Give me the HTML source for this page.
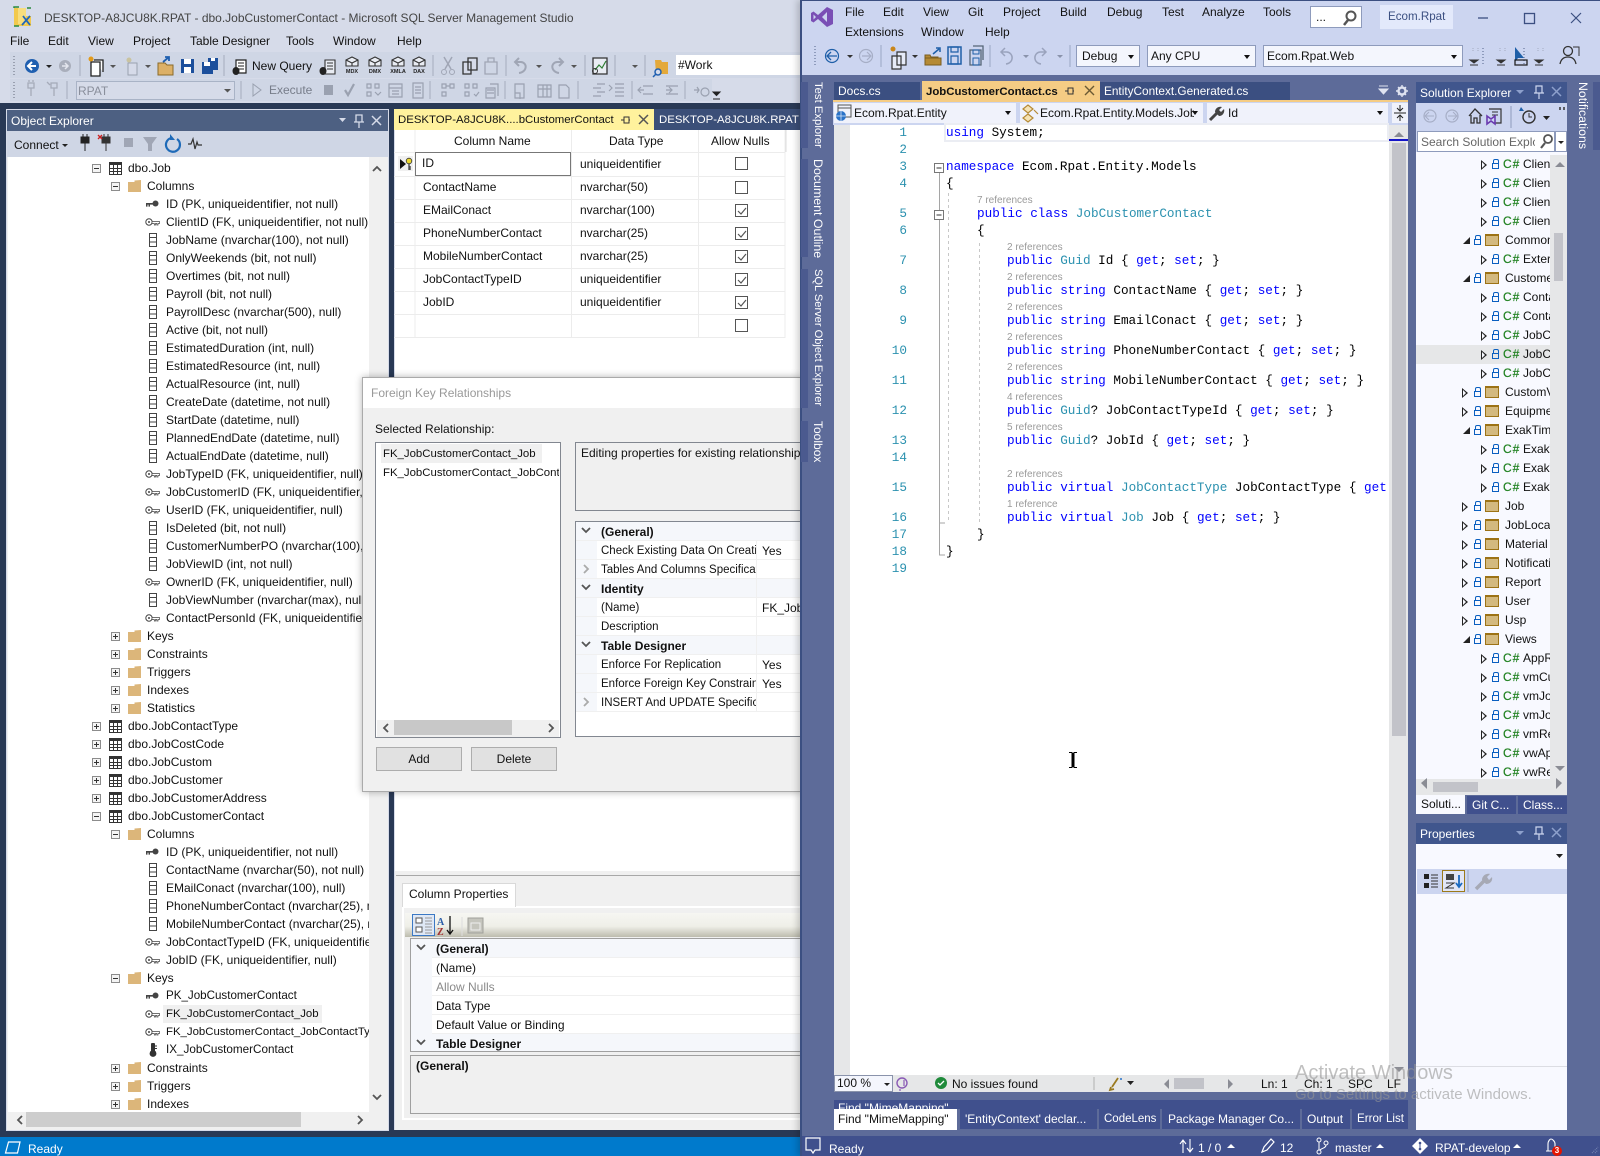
<!DOCTYPE html>
<html><head><meta charset="utf-8"><title>SSMS and Visual Studio</title>
<style>
*{box-sizing:border-box;margin:0;padding:0}
html,body{width:1600px;height:1156px;overflow:hidden;background:#293955}
body{position:relative;font:12px "Liberation Sans",sans-serif;color:#111}
.a{position:absolute}
.t{position:absolute;white-space:nowrap;line-height:16px;font-size:12px}
.w{color:#fff}
.ot{position:absolute;left:8px;top:159px;width:361px;height:953px;overflow:hidden}
.r{height:18px;line-height:18px;position:relative;white-space:nowrap;font-size:12px}
.r span{position:absolute;top:0}
.r span.nm{font-size:11.4px}
.l1 span{left:120px}.l2 span{left:139px}.l3 span{left:158px}
.ex{position:absolute;top:5px;width:9px;height:9px;border:1px solid #8c8c8c;background:#f4f4f4}
.ex::after{content:"";position:absolute;left:1px;top:3px;width:5px;height:1px;background:#333}
.ex.p::before{content:"";position:absolute;left:3px;top:1px;width:1px;height:5px;background:#333}
.l1 .ex{left:84px}.l2 .ex{left:103px}
.r svg{position:absolute}
.l1 svg{left:101px;top:3px;width:13px;height:13px}
.l2 svg{left:120px;top:3px;width:13px;height:12px}
.l3 svg{left:137px;top:2px;width:15px;height:14px}
.sel{position:absolute;left:155px;top:0;width:159px;height:18px;background:#f0f0f0}
.g{position:absolute;font-size:12px;white-space:nowrap;line-height:16px}
.cb{position:absolute;left:735px;width:13px;height:13px;border:1px solid #555;background:#fff}
.cb svg{position:absolute;left:1px;top:1px;width:10px;height:10px}
.pr{position:absolute;left:576px;width:224px;height:19px;border-bottom:1px solid #f0f0f0;background:#fff;overflow:hidden}
.pr .n{position:absolute;left:25px;top:2px;width:155px;overflow:hidden;white-space:nowrap;line-height:16px;font-size:11.5px}
.pr .v{position:absolute;left:186px;top:2px;line-height:16px;white-space:nowrap}
.pr .gu{position:absolute;left:0;top:0;width:21px;height:19px;background:#f5f7fb}
.pr.cat{background:#f5f7fb}
.pr.cat .n{font-weight:bold;font-size:12px}
.cv{position:absolute;left:5px;top:5px;width:10px;height:8px}
.pc{position:absolute;left:411px;width:389px;height:19px;background:#fff;border-bottom:1px solid #f0f0f0}
.pc .gu{position:absolute;left:0;top:0;width:21px;height:19px;background:#f5f7fb}
.pc .n{position:absolute;left:25px;top:2px;line-height:16px;white-space:nowrap}
.pc.cat{background:#f5f7fb;font-weight:bold}
#vs{position:absolute;left:800px;top:0;width:800px;height:1156px;background:#5d6b99;box-shadow:-3px 0 6px rgba(0,0,0,.18);border-left:2px solid #3b4f81}
.tabd{position:absolute;background:#3b4f81;color:#fff;white-space:nowrap;overflow:hidden;font-size:12px;line-height:18px}
.vt{position:absolute;white-space:nowrap;color:#fff;font-size:12px;transform-origin:0 0;transform:rotate(90deg);line-height:14px}
.combo{position:absolute;background:#f4f6fd;border:1px solid #8e9bbc;white-space:nowrap;overflow:hidden;line-height:20px;font-size:12px;padding-left:5px}
.combo i{position:absolute;right:5px;top:9px;border:3px solid transparent;border-top:4px solid #111;border-bottom:0}
.c{position:absolute;font:12.67px/16px "Liberation Mono",monospace;white-space:pre;color:#000}
.k{color:#0000ff}.y{color:#2b91af}
.ln{position:absolute;left:860px;width:47px;text-align:right;font:12.67px/16px "Liberation Mono",monospace;color:#2b91af}
.rf{position:absolute;font-size:10px;line-height:12px;color:#9a9a9a;white-space:nowrap;margin-top:1px}
.st{position:absolute;left:1416px;top:155px;width:134px;height:624px;overflow:hidden;background:#f8f9ff}
.s{height:19px;position:relative;line-height:19px;white-space:nowrap;font-size:12px}
.s.on{background:#e6e7e8}
.s span{position:absolute;left:107px;top:0}
.s.f span{left:89px}
.s em{position:absolute;left:87px;top:0;font:12px/19px "Liberation Sans";color:#1f801f;font-style:normal;letter-spacing:1px;-webkit-text-stroke:.2px #1f801f}
.s .h{position:absolute;left:65px;top:5px;border:5px solid transparent;border-left:6px solid #222;border-right:0}
.s .h::after{content:"";position:absolute;left:-5px;top:-3px;border:3px solid transparent;border-left:3px solid #f8f9ff;border-right:0}
.s.f .h{left:46px}
.s .o{position:absolute;left:47px;top:6px;width:0;height:0;border-style:solid;border-width:0 0 7px 7px;border-color:transparent transparent #222 transparent}
.s .l{position:absolute;left:76px;top:8px;width:7px;height:6px;border:1.4px solid #0a5fc0}
.s .l::before{content:"";position:absolute;left:0;top:-5px;width:4px;height:4px;border:1.2px solid #0a5fc0;border-bottom:0;border-radius:2px 2px 0 0}
.s.f .l{left:58px}
.s .d{position:absolute;left:69px;top:3px;width:14px;height:12px;background:#d3b97f;border:1px solid #9c7215;border-top-width:2px}
</style></head><body>
<svg width="0" height="0" style="position:absolute"><defs>
<symbol id="tb" viewBox="0 0 13 13"><rect x=".5" y=".5" width="12" height="12" fill="#fff" stroke="#333"/><rect x="0" y="0" width="13" height="3" fill="#333"/><path d="M4.5 3v10M8.5 3v10M0 6.5h13M0 9.5h13" stroke="#333" fill="none"/></symbol>
<symbol id="fd" viewBox="0 0 13 12"><path d="M0 2h6.5V0.5L13 0v12H0z" fill="#dcb67a"/></symbol>
<symbol id="cl" viewBox="0 0 15 14"><rect x="4.5" y=".5" width="7" height="13" fill="#fff" stroke="#444"/><path d="M4.5 4.5h7M4.5 9h7" stroke="#444" fill="none"/></symbol>
<symbol id="pk" viewBox="0 0 15 14"><circle cx="10.5" cy="6.5" r="3" fill="#444"/><path d="M1 6h7v1.6H5v2H3.5v-2H2.500v2H1z" fill="#444"/></symbol>
<symbol id="fk" viewBox="0 0 15 14"><circle cx="4" cy="7" r="3.200" fill="#fff" stroke="#444"/><circle cx="4" cy="7" r="1" fill="#444"/><path d="M7 6.500h7.500v2H13v1.500h-1.200V8.500H10.500v1.500H9.300V8.500H7z" fill="#fff" stroke="#444" stroke-width=".7"/></symbol>
<symbol id="ix" viewBox="0 0 15 14"><rect x="6" y="0" width="4" height="9" rx="1" fill="#333"/><circle cx="8" cy="10.500" r="3.400" fill="#333"/><path d="M10 3h2M10 5.500h2" stroke="#333"/></symbol>
<symbol id="ck" viewBox="0 0 10 10"><path d="M1 5l3 3 5-6" stroke="#555" stroke-width="1.200" fill="none"/></symbol>
<symbol id="cv" viewBox="0 0 10 8"><path d="M1 1l4 4 4-4" stroke="#555" stroke-width="1.800" fill="none"/></symbol>
<symbol id="cr" viewBox="0 0 8 10"><path d="M1 1l4 4-4 4" stroke="#aaa" stroke-width="1.800" fill="none"/></symbol>
</defs></svg>

<!-- SSMS chrome -->
<div class="a" style="left:0;top:0;width:800px;height:103px;background:#d6dbe9"></div>
<div class="a" style="left:10px;top:52px;width:790px;height:26px;background:#cfd6e5"></div>
<div class="a" style="left:10px;top:79px;width:702px;height:22px;background:#cfd6e5"></div>
<div class="t" style="left:44px;top:10px;color:#444">DESKTOP-A8JCU8K.RPAT - dbo.JobCustomerContact - Microsoft SQL Server Management Studio</div>
<div class="t" style="left:10px;top:33px">File</div><div class="t" style="left:48px;top:33px">Edit</div><div class="t" style="left:88px;top:33px">View</div><div class="t" style="left:133px;top:33px">Project</div><div class="t" style="left:190px;top:33px">Table Designer</div><div class="t" style="left:286px;top:33px">Tools</div><div class="t" style="left:333px;top:33px">Window</div><div class="t" style="left:397px;top:33px">Help</div>
<div class="t" style="left:252px;top:58px">New Query</div>
<div class="a" style="left:676px;top:55px;width:124px;height:20px;background:#fff"></div>
<div class="t" style="left:678px;top:57px">#Work</div>
<div class="a" style="left:76px;top:81px;width:159px;height:19px;background:#d6dbe9;border:1px solid #a9b3c6"></div>
<div class="t" style="left:78px;top:83px;color:#8a8f9c">RPAT</div>
<div class="t" style="left:269px;top:82px;color:#777d8a">Execute</div>
<svg class="a" style="left:0;top:0" width="800" height="103" fill="none">
<path d="M14 8h12v8h5v10H14z" fill="#f2c94c"/><path d="M18 8h8v16h-8z" fill="#f7dd7e"/><path d="M14 8v-1h5M31 8h-4M14 26h5" stroke="#2b8a3e" stroke-width="1.500"/><path d="M22 25l8-9M23 16l7 9" stroke="#2266bb" stroke-width="1.800"/>
<path d="M14 56v20M14 82v18" stroke="#99a0b0" stroke-width="2" stroke-dasharray="1 2"/>
<circle cx="32" cy="66" r="7" fill="#1f5fb0"/><path d="M36 66h-7M32 62l-4 4 4 4" stroke="#fff" stroke-width="2"/>
<path d="M46 65h6l-3 3z" fill="#222"/>
<circle cx="65" cy="66" r="6" fill="#a9aebb"/><path d="M62 66h6M65 63l3 3-3 3" stroke="#e4e6ee" stroke-width="1.500"/>
<path d="M80 55v21M224 55v21M433 55v21M506 55v21M585 55v21M615 55v21M645 55v21M67 81v18M241 81v18M505 81v18M578 81v18M632 81v18M685 81v18M430 81v18" stroke="#a5acbd"/>
<path d="M91 62h9v14h-9z M94 60h9v12" stroke="#222" stroke-width="1.300" fill="#fff"/><circle cx="91" cy="59" r="2.500" fill="#e29a1a"/><path d="M110 65h6l-3 3zM145 65h6l-3 3zM536 65h6l-3 3zM571 65h6l-3 3zM632 65h6l-3 3zM224 89h7l-3.500 3.500z" fill="#555"/>
<path d="M128 63h9v12h-9z" stroke="#9aa1b0" fill="#d6dbe9"/><circle cx="129" cy="60" r="2.500" fill="#c9c3a0"/>
<path d="M158 63h7l2 2h6v10h-15z" fill="#dcb067" stroke="#8a6a2a"/><path d="M163 62l6-5M165 57h4v4" stroke="#1f5fb0" stroke-width="1.800"/>
<path d="M181 59h13v14h-13z" fill="#1c4f9c"/><path d="M184 59h7v5h-7zM184 67h7v6h-7z" fill="#fff"/>
<path d="M202 62h11v12h-11z" fill="#1c4f9c"/><path d="M208 58h10v12h-5V62h-5z" fill="#1c4f9c"/><path d="M204 62h6v4h-6zM211 58h4v3h-4z" fill="#fff"/>
<path d="M236 60h10v13h-10z" fill="#fff" stroke="#222" stroke-width="1.200"/><path d="M238 63h6M238 66h6M238 69h6" stroke="#222"/><ellipse cx="236" cy="71" rx="3.500" ry="4" fill="#222"/>
<g stroke="#333" stroke-width="1.100" fill="#e9ecf3"><path d="M325 60h10v14h-10z"/><path d="M346 60l6-3 6 3v6h-12z"/><path d="M369 60l6-3 6 3v6h-12z"/><path d="M392 60l6-3 6 3v6h-12z"/><path d="M413 60l6-3 6 3v6h-12z"/><path d="M346 60l6 3 6-3M369 60l6 3 6-3M392 60l6 3 6-3M413 60l6 3 6-3M352 63v3M375 63v3M398 63v3M419 63v3"/></g>
<path d="M327 63h6M327 66h6M327 69h6" stroke="#333"/>
<ellipse cx="323" cy="71" rx="3.500" ry="4" fill="#222"/>
<g font-family="Liberation Sans" font-size="5.500" font-weight="bold" fill="#222" text-anchor="middle"><text x="352" y="73">MDX</text><text x="375" y="73">DMX</text><text x="398" y="73">XMLA</text><text x="419" y="73">DAX</text></g>
<path d="M444 57l7 12M452 57l-7 12" stroke="#a0a6b5" stroke-width="1.500"/><circle cx="444" cy="72" r="2.500" stroke="#a0a6b5"/><circle cx="452" cy="72" r="2.500" stroke="#a0a6b5"/>
<path d="M468 58h9v12h-9zM463 62h8v12h-8z" stroke="#333" stroke-width="1.300" fill="#d6dbe9"/>
<path d="M485 62h12v12h-12zM488 58h6v4h-6z" stroke="#a0a6b5" stroke-width="1.300"/>
<path d="M519 73c8-1 9-10 2-11h-5M519 58l-4 4 4 4" stroke="#a0a6b5" stroke-width="2"/>
<path d="M559 73c-8-1-9-10-2-11h5M559 58l4 4-4 4" stroke="#a0a6b5" stroke-width="2"/>
<path d="M593 58h14v16h-14z" stroke="#333" stroke-width="1.300" fill="#e9ecf3"/><path d="M595 70l4-5 3 3 4-7" stroke="#2e7d32" stroke-width="1.200"/><circle cx="595" cy="71" r="2.500" stroke="#333"/>
<path d="M655 60h6l1 2h6v12h-12z" fill="#e4a93a"/><circle cx="658" cy="72" r="3" stroke="#1f5fb0" stroke-width="1.500" fill="#d6dbe9"/><path d="M656 74l-3 3" stroke="#1f5fb0" stroke-width="1.500"/>
<g stroke="#a5abb9" stroke-width="1.300" fill="none"><path d="M28 83h6v5h-6zM31 88v8M29 82v-2M33 82v-2"/><path d="M51 83h6v5h-6zM54 88v8M47 82l3 3" /></g>
<path d="M253 84l8 6-8 6z" stroke="#9aa1b0" fill="none"/><rect x="324" y="85" width="9" height="10" fill="#9aa1b0"/><path d="M345 90l3 5 6-11" stroke="#9aa1b0" stroke-width="2.200"/>
<g stroke="#9aa1b0" stroke-width="1.200" fill="none">
<path d="M367 84h4v4h-4zM375 84h4v4h-4zM367 92h4v4h-4zM375 92l3 3 3-3"/><path d="M389 84h13v13h-13zM389 88h13M392 91h7M392 94h7"/><path d="M413 83h10v15h-10zM415 87h6M415 90h6M415 93h6"/>
<path d="M442 84h4v4h-4zM450 84h4v4h-4zM442 92h4v4h-4zM446 86h4"/><path d="M465 84h4v4h-4zM473 84h4v4h-4zM465 92h4v4h-4zM474 94l2 2 3-4"/><path d="M486 88h9v10h-9zM490 84h8v12M487 90h7M487 93h7"/>
<path d="M515 84h9v14h-9zM515 93h5v6"/><path d="M538 85h13v12h-13zM538 89h13M543 85v12M547 85v12"/><path d="M559 85h7l3 3v10h-10z"/><path d="M597 84h8M593 88h8M597 92h8M593 96h8"/><path d="M615 84h9M615 88h9M615 92h9M615 96h9M609 85l3 3-3 3"/>
<path d="M643 86h10M643 94h10M638 90h6M641 87l-3 3 3 3"/><path d="M666 86h12M666 94h12M666 90h6M669 87l3 3-3 3"/><circle cx="705" cy="92" r="4"/><path d="M694 90h5M697 87l2 3-2 3"/></g>
<path d="M713 92h7l-3.500 3.500zM713 99h7" stroke="#222" fill="#222"/>
</svg>

<!-- Object explorer -->
<div class="a" style="left:6px;top:109px;width:383px;height:1022px;background:#f0f0f0;border:1px solid #d6dbe9"></div>
<div class="a" style="left:7px;top:110px;width:381px;height:21px;background:#4d6082"></div>
<div class="t w" style="left:11px;top:113px">Object Explorer</div>
<div class="a" style="left:7px;top:131px;width:381px;height:26px;background:#cfd6e5"></div>
<div class="t" style="left:14px;top:137px">Connect</div>
<svg class="a" style="left:0;top:108px" width="390" height="50" fill="none">
<path d="M339 10h7l-3.500 4z" fill="#d6dbe9"/><path d="M356 7h6v7h-6zM354 14h10M359 14v6" stroke="#d6dbe9" stroke-width="1.300"/><path d="M372 8l9 9M381 8l-9 9" stroke="#d6dbe9" stroke-width="1.500"/>
<path d="M62 36h6l-3 3z" fill="#222"/>
<path d="M81 29h8v6h-8zM85 35v8M83 29v-3M87 29v-3" fill="#222" stroke="#222"/>
<path d="M102 29h8v6h-8zM106 35v8M108 29v-3M104 29v-3" fill="#333" stroke="#333"/><path d="M98 27l4 4M102 27l-4 4" stroke="#c22" stroke-width="1.300"/>
<rect x="124" y="30" width="9" height="9" fill="#a0a6b5"/><path d="M143 29h14l-5 7v7h-4v-7z" fill="#a0a6b5"/>
<path d="M177 31a7 7 0 1 1-6-1" stroke="#1e6ab8" stroke-width="2.200"/><path d="M170 26v6h5z" fill="#1e6ab8"/>
<path d="M188 36h3l2-5 2 10 2-7 1 3h4" stroke="#333" stroke-width="1.200"/></svg>
<div class="a" style="left:8px;top:157px;width:361px;height:955px;background:#fff"></div>
<div class="a" style="left:369px;top:157px;width:18px;height:955px;background:#f0f0f0"></div>
<svg class="a" style="left:369px;top:157px" width="18" height="970" fill="none"><path d="M4 14l4-4 4 4M4 938l4 4 4-4" stroke="#555" stroke-width="1.800"/></svg>
<div class="a" style="left:8px;top:1112px;width:379px;height:16px;background:#f0f0f0"></div>
<div class="a" style="left:26px;top:1112px;width:275px;height:15px;background:#cdcdcd"></div>
<svg class="a" style="left:8px;top:1112px" width="379" height="16" fill="none"><path d="M14 4l-4 4 4 4M350 4l4 4-4 4" stroke="#555" stroke-width="1.800"/></svg>
<div class="ot">
<div class="r l1"><i class="ex"></i><svg><use href="#tb"/></svg><span>dbo.Job</span></div>
<div class="r l2"><i class="ex"></i><svg><use href="#fd"/></svg><span>Columns</span></div>
<div class="r l3"><svg><use href="#pk"/></svg><span>ID (PK, uniqueidentifier, not null)</span></div>
<div class="r l3"><svg><use href="#fk"/></svg><span>ClientID (FK, uniqueidentifier, not null)</span></div>
<div class="r l3"><svg><use href="#cl"/></svg><span>JobName (nvarchar(100), not null)</span></div>
<div class="r l3"><svg><use href="#cl"/></svg><span>OnlyWeekends (bit, not null)</span></div>
<div class="r l3"><svg><use href="#cl"/></svg><span>Overtimes (bit, not null)</span></div>
<div class="r l3"><svg><use href="#cl"/></svg><span>Payroll (bit, not null)</span></div>
<div class="r l3"><svg><use href="#cl"/></svg><span>PayrollDesc (nvarchar(500), null)</span></div>
<div class="r l3"><svg><use href="#cl"/></svg><span>Active (bit, not null)</span></div>
<div class="r l3"><svg><use href="#cl"/></svg><span>EstimatedDuration (int, null)</span></div>
<div class="r l3"><svg><use href="#cl"/></svg><span>EstimatedResource (int, null)</span></div>
<div class="r l3"><svg><use href="#cl"/></svg><span>ActualResource (int, null)</span></div>
<div class="r l3"><svg><use href="#cl"/></svg><span>CreateDate (datetime, not null)</span></div>
<div class="r l3"><svg><use href="#cl"/></svg><span>StartDate (datetime, null)</span></div>
<div class="r l3"><svg><use href="#cl"/></svg><span>PlannedEndDate (datetime, null)</span></div>
<div class="r l3"><svg><use href="#cl"/></svg><span>ActualEndDate (datetime, null)</span></div>
<div class="r l3"><svg><use href="#fk"/></svg><span>JobTypeID (FK, uniqueidentifier, null)</span></div>
<div class="r l3"><svg><use href="#fk"/></svg><span>JobCustomerID (FK, uniqueidentifier, null)</span></div>
<div class="r l3"><svg><use href="#fk"/></svg><span>UserID (FK, uniqueidentifier, null)</span></div>
<div class="r l3"><svg><use href="#cl"/></svg><span>IsDeleted (bit, not null)</span></div>
<div class="r l3"><svg><use href="#cl"/></svg><span>CustomerNumberPO (nvarchar(100), null)</span></div>
<div class="r l3"><svg><use href="#cl"/></svg><span>JobViewID (int, not null)</span></div>
<div class="r l3"><svg><use href="#fk"/></svg><span>OwnerID (FK, uniqueidentifier, null)</span></div>
<div class="r l3"><svg><use href="#cl"/></svg><span>JobViewNumber (nvarchar(max), null)</span></div>
<div class="r l3"><svg><use href="#fk"/></svg><span>ContactPersonId (FK, uniqueidentifier, null)</span></div>
<div class="r l2"><i class="ex p"></i><svg><use href="#fd"/></svg><span>Keys</span></div>
<div class="r l2"><i class="ex p"></i><svg><use href="#fd"/></svg><span>Constraints</span></div>
<div class="r l2"><i class="ex p"></i><svg><use href="#fd"/></svg><span>Triggers</span></div>
<div class="r l2"><i class="ex p"></i><svg><use href="#fd"/></svg><span>Indexes</span></div>
<div class="r l2"><i class="ex p"></i><svg><use href="#fd"/></svg><span>Statistics</span></div>
<div class="r l1"><i class="ex p"></i><svg><use href="#tb"/></svg><span>dbo.JobContactType</span></div>
<div class="r l1"><i class="ex p"></i><svg><use href="#tb"/></svg><span>dbo.JobCostCode</span></div>
<div class="r l1"><i class="ex p"></i><svg><use href="#tb"/></svg><span>dbo.JobCustom</span></div>
<div class="r l1"><i class="ex p"></i><svg><use href="#tb"/></svg><span>dbo.JobCustomer</span></div>
<div class="r l1"><i class="ex p"></i><svg><use href="#tb"/></svg><span>dbo.JobCustomerAddress</span></div>
<div class="r l1"><i class="ex"></i><svg><use href="#tb"/></svg><span>dbo.JobCustomerContact</span></div>
<div class="r l2"><i class="ex"></i><svg><use href="#fd"/></svg><span>Columns</span></div>
<div class="r l3"><svg><use href="#pk"/></svg><span>ID (PK, uniqueidentifier, not null)</span></div>
<div class="r l3"><svg><use href="#cl"/></svg><span>ContactName (nvarchar(50), not null)</span></div>
<div class="r l3"><svg><use href="#cl"/></svg><span>EMailConact (nvarchar(100), null)</span></div>
<div class="r l3"><svg><use href="#cl"/></svg><span>PhoneNumberContact (nvarchar(25), null)</span></div>
<div class="r l3"><svg><use href="#cl"/></svg><span>MobileNumberContact (nvarchar(25), null)</span></div>
<div class="r l3"><svg><use href="#fk"/></svg><span>JobContactTypeID (FK, uniqueidentifier, null)</span></div>
<div class="r l3"><svg><use href="#fk"/></svg><span>JobID (FK, uniqueidentifier, null)</span></div>
<div class="r l2"><i class="ex"></i><svg><use href="#fd"/></svg><span>Keys</span></div>
<div class="r l3"><svg><use href="#pk"/></svg><span class="nm" style="font-size:11.6px">PK_JobCustomerContact</span></div>
<div class="r l3"><i class="sel"></i><svg><use href="#fk"/></svg><span class="nm">FK_JobCustomerContact_Job</span></div>
<div class="r l3"><svg><use href="#fk"/></svg><span class="nm">FK_JobCustomerContact_JobContactType</span></div>
<div class="r l3"><svg><use href="#ix"/></svg><span class="nm" style="font-size:11.7px">IX_JobCustomerContact</span></div>
<div class="r l2"><i class="ex p"></i><svg><use href="#fd"/></svg><span>Constraints</span></div>
<div class="r l2"><i class="ex p"></i><svg><use href="#fd"/></svg><span>Triggers</span></div>
<div class="r l2"><i class="ex p"></i><svg><use href="#fd"/></svg><span>Indexes</span></div>
</div>

<!-- Center doc -->
<div class="a" style="left:394px;top:109px;width:260px;height:21px;background:#fff29d"></div>
<div class="a" style="left:654px;top:109px;width:146px;height:21px;background:#3b4f78"></div>
<div class="t" style="left:398px;top:112px;font-size:11.4px">DESKTOP-A8JCU8K....bCustomerContact</div>
<div class="t w" style="left:659px;top:112px;font-size:11.4px">DESKTOP-A8JCU8K.RPAT - dbo.JobCustom</div>
<svg class="a" style="left:620px;top:112px" width="34" height="16" fill="none"><path d="M1 8h3M4 5h5v6H4zM9 8h1" stroke="#333"/><path d="M19 3l9 9M28 3l-9 9" stroke="#555" stroke-width="1.500"/></svg>
<div class="a" style="left:394px;top:130px;width:406px;height:742px;background:#fff"></div>
<div class="a" style="left:394px;top:130px;width:1px;height:1000px;background:#d6dbe9"></div>
<svg class="a" style="left:394px;top:130px" width="406" height="212" fill="none" stroke="#ececec">
<path d="M21 0v208M177.500 0v208M304.500 0v208M391 0v208"/>
<path d="M0 22.500h391M0 46.500h391M0 69.500h391M0 92.500h391M0 115.500h391M0 138.500h391M0 161.500h391M0 184.500h391M0 207.500h391"/>
<path d="M392 0v22" stroke="#ddd"/>
</svg>
<div class="a" style="left:415px;top:152px;width:156px;height:24px;border:1px solid #777;background:#fff"></div>
<div class="a" style="left:398px;top:156px;width:15px;height:15px;background:#f0f0f0"></div>
<svg class="a" style="left:398px;top:156px" width="16" height="16"><path d="M2 3l6 5-6 5z" fill="#111"/><circle cx="11" cy="5" r="2.800" fill="#ecd82e" stroke="#333" stroke-width=".8"/><path d="M11 8v6M11 11h2M11 13h2" stroke="#333" stroke-width="1.200"/></svg>
<div class="g" style="left:454px;top:133px">Column Name</div>
<div class="g" style="left:609px;top:133px">Data Type</div>
<div class="g" style="left:711px;top:133px">Allow Nulls</div>
<div class="g" style="left:422px;top:155px">ID</div>
<div class="g" style="left:423px;top:179px">ContactName</div>
<div class="g" style="left:423px;top:202px">EMailConact</div>
<div class="g" style="left:423px;top:225px">PhoneNumberContact</div>
<div class="g" style="left:423px;top:248px">MobileNumberContact</div>
<div class="g" style="left:423px;top:271px">JobContactTypeID</div>
<div class="g" style="left:423px;top:294px">JobID</div>
<div class="g" style="left:580px;top:156px">uniqueidentifier</div>
<div class="g" style="left:580px;top:179px">nvarchar(50)</div>
<div class="g" style="left:580px;top:202px">nvarchar(100)</div>
<div class="g" style="left:580px;top:225px">nvarchar(25)</div>
<div class="g" style="left:580px;top:248px">nvarchar(25)</div>
<div class="g" style="left:580px;top:271px">uniqueidentifier</div>
<div class="g" style="left:580px;top:294px">uniqueidentifier</div>
<div class="cb" style="top:157px"></div><div class="cb" style="top:181px"></div>
<div class="cb" style="top:204px"><svg><use href="#ck"/></svg></div>
<div class="cb" style="top:227px"><svg><use href="#ck"/></svg></div>
<div class="cb" style="top:250px"><svg><use href="#ck"/></svg></div>
<div class="cb" style="top:273px"><svg><use href="#ck"/></svg></div>
<div class="cb" style="top:296px"><svg><use href="#ck"/></svg></div>
<div class="cb" style="top:319px"></div>

<!-- Column properties -->
<div class="a" style="left:395px;top:871px;width:405px;height:259px;background:#f0f0f0"></div>
<div class="a" style="left:396px;top:875px;width:404px;height:1px;background:#a8a8a8"></div>
<div class="a" style="left:402px;top:906px;width:398px;height:214px;background:#f0f0f0;border:2px solid #fff;border-right:0"></div>
<div class="a" style="left:402px;top:883px;width:114px;height:24px;background:#fff;border:1px solid #d9d9d9;border-bottom:0"></div>
<div class="t" style="left:409px;top:886px;background:#fff">Column Properties</div>
<div class="a" style="left:405px;top:913px;width:395px;height:24px;background:linear-gradient(#f6f6f2,#efefe8 55%,#bdbcae)"></div>
<div class="a" style="left:412px;top:914px;width:23px;height:22px;background:#dfe8f5;border:1px solid #3b78c4"></div>
<svg class="a" style="left:412px;top:914px" width="90" height="24" fill="none">
<g stroke="#555"><rect x="4" y="4" width="6" height="5" fill="#fff"/><rect x="4" y="13" width="6" height="5" fill="#fff"/><path d="M13 4h7M13 7h7M13 10h7M13 13h7M13 16h7M13 19h7" stroke="#999"/></g>
<text x="25" y="11" font-family="Liberation Serif" font-size="10" font-weight="bold" fill="#2a5da8">A</text><text x="25" y="21" font-family="Liberation Serif" font-size="10" font-weight="bold" fill="#a03030">Z</text><path d="M38 2v17M35 16l3 4 3-4" stroke="#111" stroke-width="1.300"/>
<path d="M50 3v19" stroke="#ddd"/><rect x="56" y="4" width="15" height="15" fill="#c5c5bd" stroke="#a0a09a"/><path d="M59 9h9v7h-9z" stroke="#eee"/></svg>
<div class="a" style="left:410px;top:938px;width:390px;height:114px;border:1px solid #a0a0a0;border-right:0;background:#fff"></div>
<div class="pc cat" style="top:939px"><i class="gu"></i><svg class="cv"><use href="#cv"/></svg><span class="n">(General)</span></div>
<div class="pc" style="top:958px"><i class="gu"></i><span class="n">(Name)</span></div>
<div class="pc" style="top:977px"><i class="gu"></i><span class="n" style="color:#8a8a8a">Allow Nulls</span></div>
<div class="pc" style="top:996px"><i class="gu"></i><span class="n">Data Type</span></div>
<div class="pc" style="top:1015px"><i class="gu"></i><span class="n">Default Value or Binding</span></div>
<div class="pc cat" style="top:1034px;height:17px;border:0"><i class="gu" style="height:17px"></i><svg class="cv"><use href="#cv"/></svg><span class="n">Table Designer</span></div>
<div class="a" style="left:410px;top:1055px;width:390px;height:59px;border:1px solid #a0a0a0;border-right:0;background:#f0f0f0"></div>
<div class="t" style="left:416px;top:1058px;font-weight:bold">(General)</div>

<!-- Dialog -->
<div class="a" style="left:362px;top:377px;width:440px;height:415px;background:#f0f0f0;border:1px solid #aaa;box-shadow:0 0 7px rgba(0,0,0,.3)"></div>
<div class="a" style="left:363px;top:378px;width:438px;height:30px;background:#fff"></div>
<div class="t" style="left:371px;top:385px;color:#999">Foreign Key Relationships</div>
<div class="t" style="left:375px;top:421px">Selected Relationship:</div>
<div class="a" style="left:375px;top:442px;width:186px;height:296px;background:#fff;border:1px solid #828790"></div>
<div class="a" style="left:381px;top:444px;width:161px;height:19px;background:#f0f0f0"></div>
<div class="t" style="left:383px;top:446px;font-size:11.4px">FK_JobCustomerContact_Job</div>
<div class="a" style="left:383px;top:465px;width:176px;height:18px;overflow:hidden"><div class="t" style="left:0;top:0;font-size:11.4px">FK_JobCustomerContact_JobContactType</div></div>
<div class="a" style="left:377px;top:720px;width:182px;height:17px;background:#f0f0f0"></div>
<div class="a" style="left:394px;top:720px;width:118px;height:15px;background:#c8c8c8"></div>
<svg class="a" style="left:377px;top:720px" width="182" height="17" fill="none"><path d="M11 4l-4 4 4 4M172 4l4 4-4 4" stroke="#555" stroke-width="1.800"/></svg>
<div class="a" style="left:376px;top:747px;width:86px;height:24px;background:#e1e1e1;border:1px solid #adadad;text-align:center;line-height:22px">Add</div>
<div class="a" style="left:471px;top:747px;width:86px;height:24px;background:#e1e1e1;border:1px solid #adadad;text-align:center;line-height:22px">Delete</div>
<div class="a" style="left:575px;top:442px;width:226px;height:69px;background:#f0f0f0;border:1px solid #828790;overflow:hidden"></div>
<div class="t" style="left:581px;top:445px">Editing properties for existing relationship.</div>
<div class="a" style="left:575px;top:521px;width:226px;height:216px;background:#fff;border:1px solid #828790"></div>
<div class="pr cat" style="top:522px"><i class="gu"></i><svg class="cv"><use href="#cv"/></svg><span class="n">(General)</span></div>
<div class="pr" style="top:541px"><i class="gu"></i><span class="n">Check Existing Data On Creation</span><span class="v">Yes</span></div>
<div class="pr" style="top:560px"><i class="gu"></i><svg class="cv" style="left:7px;top:4px;width:8px;height:10px"><use href="#cr"/></svg><span class="n">Tables And Columns Specification</span></div>
<div class="pr cat" style="top:579px"><i class="gu"></i><svg class="cv"><use href="#cv"/></svg><span class="n">Identity</span></div>
<div class="pr" style="top:598px"><i class="gu"></i><span class="n">(Name)</span><span class="v">FK_JobCustomerContact_Job</span></div>
<div class="pr" style="top:617px"><i class="gu"></i><span class="n">Description</span></div>
<div class="pr cat" style="top:636px"><i class="gu"></i><svg class="cv"><use href="#cv"/></svg><span class="n">Table Designer</span></div>
<div class="pr" style="top:655px"><i class="gu"></i><span class="n">Enforce For Replication</span><span class="v">Yes</span></div>
<div class="pr" style="top:674px"><i class="gu"></i><span class="n">Enforce Foreign Key Constraint</span><span class="v">Yes</span></div>
<div class="pr" style="top:693px"><i class="gu"></i><svg class="cv" style="left:7px;top:4px;width:8px;height:10px"><use href="#cr"/></svg><span class="n">INSERT And UPDATE Specification</span></div>
<svg class="a" style="left:756px;top:541px" width="2" height="171"><path d="M.5 0v171" stroke="#f0f0f0"/></svg>

<!-- SSMS status -->
<div class="a" style="left:0;top:1137px;width:800px;height:19px;background:#007acc"></div>
<svg class="a" style="left:4px;top:1141px" width="18" height="13" fill="none"><path d="M4.500 1H16l-2.500 11H1.500z" stroke="#fff" stroke-width="1.200"/></svg>
<div class="t w" style="left:28px;top:1141px">Ready</div>

<!-- VS window -->
<div id="vs"></div>
<div class="a" style="left:802px;top:0;width:798px;height:75px;background:#ccd5f0"></div>
<div class="a" style="left:801px;top:0;width:799px;height:1px;background:#3b4f81"></div>
<div class="t" style="left:845px;top:4px">File</div><div class="t" style="left:883px;top:4px">Edit</div><div class="t" style="left:923px;top:4px">View</div><div class="t" style="left:968px;top:4px">Git</div><div class="t" style="left:1003px;top:4px">Project</div><div class="t" style="left:1060px;top:4px">Build</div><div class="t" style="left:1107px;top:4px">Debug</div><div class="t" style="left:1162px;top:4px">Test</div><div class="t" style="left:1202px;top:4px">Analyze</div><div class="t" style="left:1263px;top:4px">Tools</div>
<div class="t" style="left:845px;top:24px">Extensions</div><div class="t" style="left:921px;top:24px">Window</div><div class="t" style="left:985px;top:24px">Help</div>
<div class="a" style="left:1310px;top:6px;width:52px;height:22px;background:#fff;border:1px solid #8e9bbc"></div>
<div class="t" style="left:1316px;top:9px">...</div>
<div class="a" style="left:1380px;top:5px;width:73px;height:24px;background:#e3e9fb"></div>
<div class="t" style="left:1388px;top:9px;color:#3b4f81;font-size:11.6px">Ecom.Rpat</div>
<div class="combo" style="left:1076px;top:45px;width:64px;height:22px">Debug<i></i></div>
<div class="combo" style="left:1147px;top:45px;width:109px;height:22px;padding-left:3px">Any CPU<i></i></div>
<div class="combo" style="left:1263px;top:45px;width:200px;height:22px;padding-left:3px">Ecom.Rpat.Web<i></i></div>
<svg class="a" style="left:802px;top:0" width="798" height="75" fill="none">
<path d="M25 7l6 3v14l-6 3-9-8-4.500 3.500L9 21V13l2.500-1.500L16 15zM25 12l-5 5 5 5zM11.500 14.500v5l2.500-2.500z" fill="#7a4fb5" fill-rule="evenodd"/>
<circle cx="549" cy="16" r="4.500" stroke="#555" stroke-width="2"/><path d="M546 20l-4 5" stroke="#555" stroke-width="2.500"/>
<path d="M676 18h10" stroke="#3b4f81" stroke-width="1.300"/><rect x="722.500" y="13.500" width="10" height="10" stroke="#3b4f81" stroke-width="1.300"/><path d="M769 13l10 10M779 13l-10 10" stroke="#3b4f81" stroke-width="1.200"/>
<path d="M13 46v20" stroke="#8e9bbc" stroke-width="2" stroke-dasharray="1 2"/>
<circle cx="30" cy="56" r="6.500" stroke="#1e5fa8" stroke-width="1.200"/><path d="M35 56h-9M29 52l-4 4 4 4" stroke="#1e5fa8" stroke-width="1.300"/><path d="M45 55h6l-3 3zM110 55h6l-3 3z" fill="#333"/>
<path d="M221 55h6l-3 3zM255 55h6l-3 3z" fill="#8a93ab"/>
<circle cx="64" cy="56" r="6.500" stroke="#a6aec6" stroke-width="1.200"/><path d="M60 56h8M65 52l4 4-4 4" stroke="#a6aec6" stroke-width="1.200"/>
<path d="M79 45v22M188 45v22M268 45v22" stroke="#9aa6c4"/>
<path d="M95 52h9v13h-9zM90 56h9v13h-9z" fill="#e6ebf8" stroke="#333" stroke-width="1.200"/><circle cx="91" cy="49" r="2.500" fill="#c9861a"/>
<path d="M123 58h16v7h-16z M123 58v-3h5l1 2h7v1" fill="#b58a35" stroke="#7a5d20"/><path d="M131 54l6-5M134 48h4v4" stroke="#1e5fa8" stroke-width="1.500"/>
<path d="M146 47h13v17h-13z" stroke="#1e5fa8" stroke-width="1.500"/><path d="M149 47h7v5h-7zM149 56h7v8h-7z" stroke="#1e5fa8" stroke-width="1.200"/>
<path d="M168 50h11v15h-11z" stroke="#567" stroke-width="1.300"/><path d="M171 46h10v14" stroke="#567" stroke-width="1.300"/><path d="M171 50h6v4h-6zM171 58h6v7h-6z" stroke="#1e5fa8"/>
<path d="M204 64c8-1 8-11 1-12h-5M203 48l-4 4 4 4" stroke="#9aa3bd" stroke-width="1.500"/><path d="M239 64c-8-1-8-11-1-12h5M240 48l4 4-4 4" stroke="#9aa3bd" stroke-width="1.500"/>
<path d="M671 48v.1M671 50v.1M676 48v.1M676 50v.1M698 48v.1M698 50v.1M703 48v.1M703 50v.1M736 48v.1M736 50v.1M741 48v.1M741 50v.1" stroke="#333" stroke-width="2"/>
<path d="M668 60h8l-4 3zM695 60h8l-4 3zM733 60h8l-4 3zM668 65h8M695 65h8M733 65h8" stroke="#333" fill="#333"/>
<path d="M681 48v18M722 48v18" stroke="#8e9bbc" stroke-width="2" stroke-dasharray="1 2"/>
<path d="M713 47l9 11h-6l-3 4z" fill="#1e5fa8"/><path d="M713 60h12v5h-12z" stroke="#222" stroke-width="1.300"/>
<circle cx="766" cy="51" r="4.500" stroke="#333" stroke-width="1.300"/><path d="M758 64c1-5 4-7 8-7s7 2 8 7" stroke="#333" stroke-width="1.300"/><path d="M771 47h6v9" stroke="#333"/>
</svg>

<!-- left vertical tabs -->
<div class="a" style="left:801px;top:82px;width:7px;height:66px;background:#4b5a8f"></div>
<div class="a" style="left:801px;top:159px;width:7px;height:98px;background:#4b5a8f"></div>
<div class="a" style="left:801px;top:269px;width:7px;height:139px;background:#4b5a8f"></div>
<div class="a" style="left:801px;top:421px;width:7px;height:41px;background:#4b5a8f"></div>
<div class="vt" style="left:825px;top:82px;font-size:11.3px">Test Explorer</div>
<div class="vt" style="left:825px;top:159px;font-size:12.4px">Document Outline</div>
<div class="vt" style="left:825px;top:269px;font-size:11.1px">SQL Server Object Explorer</div>
<div class="vt" style="left:825px;top:421px">Toolbox</div>
<div class="a" style="left:1593px;top:82px;width:7px;height:68px;background:#4b5a8f"></div>
<div class="vt" style="left:1590px;top:82px;font-size:12.3px">Notifications</div>

<!-- Editor tabs -->
<div class="tabd" style="left:834px;top:82px;width:86px;height:18px;padding-left:4px">Docs.cs</div>
<div class="a" style="left:922px;top:81px;width:178px;height:20px;background:#f5cc84"></div>
<div class="t" style="left:926px;top:84px;font-weight:bold;font-size:11.4px">JobCustomerContact.cs</div>
<div class="tabd" style="left:1100px;top:82px;width:190px;height:18px;padding-left:4px;font-size:11.8px">EntityContext.Generated.cs</div>
<svg class="a" style="left:1064px;top:84px" width="34" height="15" fill="none"><path d="M1 7h3M4 4h5v6H4zM9 7h1" stroke="#333"/><path d="M21 2l9 9M30 2l-9 9" stroke="#6b5a33" stroke-width="1.400"/></svg>
<svg class="a" style="left:1376px;top:84px" width="34" height="14" fill="none"><path d="M3 2h9M3 5h9l-4.500 5z" fill="#dfe3f0" stroke="#dfe3f0"/><circle cx="26" cy="7" r="3.500" stroke="#dfe3f0" stroke-width="2.400"/><path d="M26 1v2M26 11v2M20 7h2M30 7h2M22 3l1 1M30 3l-1 1M22 11l1-1M30 11l-1-1" stroke="#dfe3f0" stroke-width="1.400"/></svg>
<div class="a" style="left:833px;top:100px;width:575px;height:2px;background:#f5cc84"></div>
<!-- nav bar -->
<div class="a" style="left:833px;top:102px;width:575px;height:23px;background:#ccd5f0"></div>
<div class="combo" style="left:834px;top:103px;width:182px;height:20px;background:#f0f2fb;padding-left:20px;line-height:20px;border:0">Ecom.Rpat.Entity<i style="top:8px"></i></div>
<div class="combo" style="left:1020px;top:103px;width:183px;height:20px;background:#f0f2fb;padding-left:20px;line-height:20px;border:0"><div style="width:154px;overflow:hidden">Ecom.Rpat.Entity.Models.JobCust</div><i style="top:8px"></i></div>
<div class="combo" style="left:1207px;top:103px;width:181px;height:20px;background:#f0f2fb;padding-left:21px;line-height:20px;border:0">Id<i style="top:8px"></i></div>
<div class="a" style="left:1392px;top:103px;width:16px;height:20px;background:#f0f2fb"></div>
<svg class="a" style="left:834px;top:103px" width="574" height="20" fill="none">
<path d="M4 2h13v12H4zM4 5h13" stroke="#555"/><circle cx="7" cy="13" r="5" fill="#2a72c8"/><path d="M2 13h10M7 8v10" stroke="#dbe6f5" stroke-width=".8"/>
<path d="M189 6l5-4 5 4-5 4zM194 11l5 4-5 4-5-4zM200 7l4 4" stroke="#b58a35" stroke-width="1.200" fill="#f5e3b4"/>
<path d="M376 17l7-7" stroke="#444" stroke-width="3"/><path d="M381 9c0-4 4-6 7-5l-3 3 2 2 3-3c1 3-1 7-5 7z" fill="#444"/>
<path d="M566 2v6M566 12v6M563 5l3 3 3-3M563 15l3-3 3 3M560 10h12" stroke="#222"/></svg>
<!-- Editor body -->
<div class="a" style="left:834px;top:125px;width:574px;height:950px;background:#fff"></div>
<div class="a" style="left:834px;top:125px;width:16px;height:950px;background:#e6e7e8"></div>
<div class="a" style="left:1389px;top:125px;width:19px;height:950px;background:#e6e7e8"></div>
<div class="a" style="left:1392px;top:143px;width:14px;height:593px;background:#c2c3c9"></div>
<div class="a" style="left:1389px;top:139px;width:19px;height:2px;background:#1414c8"></div>
<svg class="a" style="left:1389px;top:125px" width="19" height="950"><path d="M5 12l5-5 5 5zM5 942l5 5 5-5z" fill="#8a8c94"/></svg>
<div class="a" style="left:944px;top:123px;width:445px;height:19px;border:2px solid #ebedf3;background:#fff"></div>
<div class="a" style="left:0;top:1px;width:0;height:0">
<svg class="a" style="left:929px;top:160px" width="60" height="400" fill="none">
<path d="M10.500 11v383H16" stroke="#a5a5a5"/>
<rect x="5.500" y="2.500" width="9" height="9" fill="#fff" stroke="#777"/><path d="M7.500 7h5" stroke="#333"/>
<rect x="5.500" y="49.500" width="9" height="9" fill="#fff" stroke="#777"/><path d="M7.500 54h5" stroke="#333"/>
<path d="M10.500 59v303H16" stroke="#a5a5a5"/>
<path d="M19.500 32v330M50.500 82v280" stroke="#c8c8c8" stroke-dasharray="3 3"/>
</svg>
<div class="ln" style="top:124px">1</div><div class="ln" style="top:141px">2</div><div class="ln" style="top:158px">3</div><div class="ln" style="top:175px">4</div><div class="ln" style="top:205px">5</div><div class="ln" style="top:222px">6</div><div class="ln" style="top:252px">7</div><div class="ln" style="top:282px">8</div><div class="ln" style="top:312px">9</div><div class="ln" style="top:342px">10</div><div class="ln" style="top:372px">11</div><div class="ln" style="top:402px">12</div><div class="ln" style="top:432px">13</div><div class="ln" style="top:449px">14</div><div class="ln" style="top:479px">15</div><div class="ln" style="top:509px">16</div><div class="ln" style="top:526px">17</div><div class="ln" style="top:543px">18</div><div class="ln" style="top:560px">19</div>
<div class="c" style="left:946px;top:124px"><span class="k">using</span> System;</div>
<div class="c" style="left:946px;top:158px"><span class="k">namespace</span> Ecom.Rpat.Entity.Models</div>
<div class="c" style="left:946px;top:175px">{</div>
<div class="rf" style="left:977px;top:193px">7 references</div>
<div class="c" style="left:977px;top:205px"><span class="k">public</span> <span class="k">class</span> <span class="y">JobCustomerContact</span></div>
<div class="c" style="left:977px;top:222px">{</div>
<div class="rf" style="left:1007px;top:240px">2 references</div>
<div class="c" style="left:1007px;top:252px"><span class="k">public</span> <span class="y">Guid</span> Id { <span class="k">get</span>; <span class="k">set</span>; }</div>
<div class="rf" style="left:1007px;top:270px">2 references</div>
<div class="c" style="left:1007px;top:282px"><span class="k">public</span> <span class="k">string</span> ContactName { <span class="k">get</span>; <span class="k">set</span>; }</div>
<div class="rf" style="left:1007px;top:300px">2 references</div>
<div class="c" style="left:1007px;top:312px"><span class="k">public</span> <span class="k">string</span> EmailConact { <span class="k">get</span>; <span class="k">set</span>; }</div>
<div class="rf" style="left:1007px;top:330px">2 references</div>
<div class="c" style="left:1007px;top:342px"><span class="k">public</span> <span class="k">string</span> PhoneNumberContact { <span class="k">get</span>; <span class="k">set</span>; }</div>
<div class="rf" style="left:1007px;top:360px">2 references</div>
<div class="c" style="left:1007px;top:372px"><span class="k">public</span> <span class="k">string</span> MobileNumberContact { <span class="k">get</span>; <span class="k">set</span>; }</div>
<div class="rf" style="left:1007px;top:390px">4 references</div>
<div class="c" style="left:1007px;top:402px"><span class="k">public</span> <span class="y">Guid</span>? JobContactTypeId { <span class="k">get</span>; <span class="k">set</span>; }</div>
<div class="rf" style="left:1007px;top:420px">5 references</div>
<div class="c" style="left:1007px;top:432px"><span class="k">public</span> <span class="y">Guid</span>? JobId { <span class="k">get</span>; <span class="k">set</span>; }</div>
<div class="rf" style="left:1007px;top:467px">2 references</div>
<div class="a" style="left:1007px;top:479px;width:382px;height:16px;overflow:hidden"><div class="c" style="left:0;top:0"><span class="k">public</span> <span class="k">virtual</span> <span class="y">JobContactType</span> JobContactType { <span class="k">get</span>; <span class="k">set</span>; }</div></div>
<div class="rf" style="left:1007px;top:497px">1 reference</div>
<div class="c" style="left:1007px;top:509px"><span class="k">public</span> <span class="k">virtual</span> <span class="y">Job</span> Job { <span class="k">get</span>; <span class="k">set</span>; }</div>
<div class="c" style="left:977px;top:526px">}</div>
<div class="c" style="left:946px;top:543px">}</div>
</div>
<svg class="a" style="left:1066px;top:750px" width="14" height="20"><path d="M3 2.500h3v15H3M11 2.500H8v15h3M7 3v14" stroke="#000" fill="none"/></svg>

<!-- editor status -->
<div class="a" style="left:834px;top:1075px;width:574px;height:17px;background:#e6e7e8"></div>
<div class="a" style="left:834px;top:1075px;width:59px;height:17px;background:#f4f6fd;border:1px solid #8a93ab;line-height:15px;padding-left:2px">100 %</div>
<svg class="a" style="left:834px;top:1075px" width="574" height="17" fill="none">
<path d="M50 8h6l-3 3z" fill="#222"/><circle cx="68" cy="8" r="5" stroke="#8a5bb5" stroke-width="1.400"/><path d="M66 14v2M70 5v6" stroke="#8a5bb5" stroke-width="1.200"/>
<circle cx="107" cy="8" r="6" fill="#1f8a3a"/><path d="M104 8l2 2 4-4" stroke="#fff" stroke-width="1.300"/>
<path d="M260 2v13" stroke="#b0b0b0"/><path d="M284 3l-6 9M277 12l-1 3 4-1" stroke="#9a7a20" stroke-width="1.800"/><circle cx="287" cy="4" r="1" fill="#2a72c8"/>
<path d="M293 6h7l-3.500 4z" fill="#222"/><path d="M335 4l-5 5 5 5zM394 4l5 5-5 5z" fill="#8a8c94"/><rect x="340" y="3" width="30" height="11" fill="#c2c3c9"/></svg>
<div class="t" style="left:952px;top:1076px">No issues found</div>
<div class="t" style="left:1261px;top:1076px">Ln: 1</div><div class="t" style="left:1304px;top:1076px">Ch: 1</div><div class="t" style="left:1348px;top:1076px">SPC</div><div class="t" style="left:1387px;top:1076px">LF</div>

<!-- bottom tabs -->
<div class="a" style="left:834px;top:1100px;width:574px;height:9px;background:#40508d;overflow:hidden"><div class="t w" style="left:4px;top:0">Find "MimeMapping"</div></div>
<div class="a" style="left:834px;top:1109px;width:123px;height:21px;background:#fff;line-height:20px;padding-left:4px;white-space:nowrap">Find "MimeMapping"</div>
<div class="tabd" style="left:960px;top:1109px;width:137px;height:20px;padding-left:5px;background:#40508d;line-height:20px">'EntityContext' declar...</div>
<div class="tabd" style="left:1099px;top:1109px;width:61px;height:20px;padding-left:5px;background:#40508d;line-height:20px;font-size:11.5px">CodeLens</div>
<div class="tabd" style="left:1162px;top:1109px;width:138px;height:20px;padding-left:6px;background:#40508d;line-height:20px">Package Manager Co...</div>
<div class="tabd" style="left:1302px;top:1109px;width:48px;height:20px;padding-left:5px;background:#40508d;line-height:20px">Output</div>
<div class="tabd" style="left:1352px;top:1109px;width:56px;height:20px;padding-left:5px;background:#40508d;line-height:20px;font-size:11.6px">Error List</div>

<!-- Solution explorer -->
<div class="a" style="left:1416px;top:82px;width:151px;height:21px;background:#40568d"></div>
<div class="t w" style="left:1420px;top:85px">Solution Explorer</div>
<svg class="a" style="left:1516px;top:84px" width="50" height="18" fill="none"><path d="M0 6h8l-4 4z" fill="#8da0cc"/><path d="M20 2h6v7h-6zM18 9h10M23 9v6" stroke="#cdd6ee" stroke-width="1.200"/><path d="M36 3l9 9M45 3l-9 9" stroke="#8da0cc" stroke-width="1.500"/></svg>
<div class="a" style="left:1416px;top:103px;width:151px;height:28px;background:#ccd5f0"></div>
<svg class="a" style="left:1416px;top:103px" width="151" height="28" fill="none">
<circle cx="14" cy="13" r="6" stroke="#a6aec6" stroke-width="1.200"/><path d="M18 13h-8M13 9l-4 4 4 4" stroke="#a6aec6"/><circle cx="36" cy="13" r="6" stroke="#a6aec6" stroke-width="1.200"/><path d="M32 13h8M37 9l4 4-4 4" stroke="#a6aec6"/>
<path d="M53 13l6-7 7 7M55 12v8h3v-5h3v5h3v-8" stroke="#333" stroke-width="1.300"/>
<path d="M73 6h12v14h-7" stroke="#333" stroke-width="1.200"/><path d="M76 9h6M76 12h6" stroke="#333"/><path d="M71 13l4 3 4-3v8l-4-3-4 3z" stroke="#6a3bb0" stroke-width="1.600"/>
<path d="M95 3v22" stroke="#8e9bbc"/><path d="M105 4l3 4h-5z" fill="#1e5fa8"/><circle cx="113" cy="14" r="6" stroke="#333" stroke-width="1.400"/><path d="M113 10v4h3" stroke="#333"/><path d="M127 13h7l-3.500 4z" fill="#222"/><path d="M144 4v3M148 4v3" stroke="#333" stroke-width="1.500"/></svg>
<div class="a" style="left:1416px;top:131px;width:151px;height:21px;background:#ccd5f0"></div>
<div class="a" style="left:1417px;top:131px;width:138px;height:21px;background:#fff;border:1px solid #8e9bbc;overflow:hidden;color:#666;line-height:20px;padding-left:3px;white-space:nowrap">Search Solution Explc</div>
<div class="a" style="left:1535px;top:132px;width:19px;height:19px;background:#fff"></div>
<div class="a" style="left:1555px;top:131px;width:12px;height:21px;background:#fff;border:1px solid #8e9bbc"></div>
<svg class="a" style="left:1535px;top:131px" width="32" height="21" fill="none"><circle cx="13" cy="8" r="4" stroke="#555" stroke-width="1.800"/><path d="M10 12l-4 5" stroke="#555" stroke-width="2.200"/><path d="M23 10h6l-3 3z" fill="#222"/></svg>
<div class="a" style="left:1416px;top:152px;width:151px;height:3px;background:#f8f9ff"></div>
<div class="st">
<div class="s"><i class="h"></i><i class="l"></i><em>C#</em><span>Client</span></div>
<div class="s"><i class="h"></i><i class="l"></i><em>C#</em><span>Client</span></div>
<div class="s"><i class="h"></i><i class="l"></i><em>C#</em><span>Client</span></div>
<div class="s"><i class="h"></i><i class="l"></i><em>C#</em><span>Client</span></div>
<div class="s f"><i class="o"></i><i class="l"></i><i class="d"></i><span>Common</span></div>
<div class="s"><i class="h"></i><i class="l"></i><em>C#</em><span>Extern</span></div>
<div class="s f"><i class="o"></i><i class="l"></i><i class="d"></i><span>Customer</span></div>
<div class="s"><i class="h"></i><i class="l"></i><em>C#</em><span>Contact</span></div>
<div class="s"><i class="h"></i><i class="l"></i><em>C#</em><span>Contact</span></div>
<div class="s"><i class="h"></i><i class="l"></i><em>C#</em><span>JobCu</span></div>
<div class="s on"><i class="h"></i><i class="l"></i><em>C#</em><span>JobCu</span></div>
<div class="s"><i class="h"></i><i class="l"></i><em>C#</em><span>JobCu</span></div>
<div class="s f"><i class="h"></i><i class="l"></i><i class="d"></i><span>CustomView</span></div>
<div class="s f"><i class="h"></i><i class="l"></i><i class="d"></i><span>Equipment</span></div>
<div class="s f"><i class="o"></i><i class="l"></i><i class="d"></i><span>ExakTime</span></div>
<div class="s"><i class="h"></i><i class="l"></i><em>C#</em><span>ExakT</span></div>
<div class="s"><i class="h"></i><i class="l"></i><em>C#</em><span>ExakT</span></div>
<div class="s"><i class="h"></i><i class="l"></i><em>C#</em><span>ExakT</span></div>
<div class="s f"><i class="h"></i><i class="l"></i><i class="d"></i><span>Job</span></div>
<div class="s f"><i class="h"></i><i class="l"></i><i class="d"></i><span>JobLocation</span></div>
<div class="s f"><i class="h"></i><i class="l"></i><i class="d"></i><span>Material</span></div>
<div class="s f"><i class="h"></i><i class="l"></i><i class="d"></i><span>Notification</span></div>
<div class="s f"><i class="h"></i><i class="l"></i><i class="d"></i><span>Report</span></div>
<div class="s f"><i class="h"></i><i class="l"></i><i class="d"></i><span>User</span></div>
<div class="s f"><i class="h"></i><i class="l"></i><i class="d"></i><span>Usp</span></div>
<div class="s f"><i class="o"></i><i class="l"></i><i class="d"></i><span>Views</span></div>
<div class="s"><i class="h"></i><i class="l"></i><em>C#</em><span>AppRe</span></div>
<div class="s"><i class="h"></i><i class="l"></i><em>C#</em><span>vmCu</span></div>
<div class="s"><i class="h"></i><i class="l"></i><em>C#</em><span>vmJob</span></div>
<div class="s"><i class="h"></i><i class="l"></i><em>C#</em><span>vmJob</span></div>
<div class="s"><i class="h"></i><i class="l"></i><em>C#</em><span>vmRe</span></div>
<div class="s"><i class="h"></i><i class="l"></i><em>C#</em><span>vwAp</span></div>
<div class="s"><i class="h"></i><i class="l"></i><em>C#</em><span>vwRe</span></div>
</div>
<div class="a" style="left:1550px;top:155px;width:17px;height:624px;background:#e6e7e8"></div>
<div class="a" style="left:1554px;top:233px;width:9px;height:48px;background:#c2c3c9"></div>
<div class="a" style="left:1416px;top:779px;width:151px;height:16px;background:#e6e7e8"></div>
<div class="a" style="left:1433px;top:782px;width:45px;height:10px;background:#c2c3c9"></div>
<svg class="a" style="left:1416px;top:155px" width="151" height="640"><path d="M139 12l5-5 5 5zM139 611l5 5 5-5zM5 628l6-5v11zM146 628l-6-5v11z" fill="#8a8c94"/></svg>
<div class="a" style="left:1416px;top:795px;width:49px;height:19px;background:#f8f9ff;line-height:19px;padding-left:5px;white-space:nowrap">Soluti...</div>
<div class="tabd" style="left:1467px;top:796px;width:49px;height:18px;padding-left:5px;background:#40508d;line-height:18px">Git C...</div>
<div class="tabd" style="left:1518px;top:796px;width:49px;height:18px;padding-left:5px;background:#40508d;line-height:18px">Class...</div>

<!-- Properties -->
<div class="a" style="left:1416px;top:823px;width:151px;height:21px;background:#40568d"></div>
<div class="t w" style="left:1420px;top:826px">Properties</div>
<svg class="a" style="left:1516px;top:825px" width="50" height="18" fill="none"><path d="M0 6h8l-4 4z" fill="#8da0cc"/><path d="M20 2h6v7h-6zM18 9h10M23 9v6" stroke="#cdd6ee" stroke-width="1.200"/><path d="M36 3l9 9M45 3l-9 9" stroke="#8da0cc" stroke-width="1.500"/></svg>
<div class="a" style="left:1416px;top:844px;width:151px;height:286px;background:#f8f9ff"></div>
<div class="a" style="left:1417px;top:869px;width:150px;height:25px;background:#ccd5f0"></div>
<div class="a" style="left:1442px;top:870px;width:23px;height:22px;background:#e2e6f5;border:1px solid #9c7a1a"></div>
<div class="a" style="left:1416px;top:1066px;width:151px;height:1px;background:#dcdde3"></div>
<svg class="a" style="left:1416px;top:844px" width="151" height="50" fill="none">
<path d="M140 10h7l-3.500 4z" fill="#222"/>
<rect x="8" y="30" width="5" height="5" fill="#222"/><rect x="8" y="39" width="5" height="5" fill="#222"/><path d="M15 31h7M15 34h7M15 37h7M15 40h7M15 43h7" stroke="#333"/>
<path d="M30 30h8v6h-8z" fill="#444"/><path d="M30 39h8l-8 5h8" stroke="#333"/><path d="M43 31v11M40 39l3 4 3-4" stroke="#1b6ac0" stroke-width="1.800"/>
<path d="M52 28v22" stroke="#9aa6c4" transform="translate(0,-2)"/>
<path d="M60 45l8-8" stroke="#a6a9b5" stroke-width="3.500"/><path d="M66 36c0-4 4-7 8-6l-3 3 2 3 3-3c1 4-2 7-6 7z" fill="#a6a9b5"/></svg>

<!-- VS status -->
<div class="a" style="left:802px;top:1136px;width:798px;height:20px;background:#40508d"></div>
<svg class="a" style="left:802px;top:1136px" width="798" height="20" fill="none">
<path d="M4 2h14v12h-5l-2 3-2-3H4z" stroke="#fff" stroke-width="1.200"/>
<path d="M381 5v12M378 8l3-4 3 4M388 3v12M385 12l3 4 3-4" stroke="#fff" stroke-width="1.100"/>
<path d="M425 12h8l-4-4zM574 12h8l-4-4zM711 12h8l-4-4z" fill="#fff"/>
<path d="M460 16l2-5 7-8 3 3-7 8z" stroke="#fff" stroke-width="1.200"/>
<circle cx="517" cy="4" r="2" stroke="#fff"/><circle cx="517" cy="16" r="2" stroke="#fff"/><circle cx="524" cy="7" r="2" stroke="#fff"/><path d="M517 6v8M524 9c0 3-4 3-6 5" stroke="#fff"/>
<path d="M618 2l8 8-8 8-8-8z" fill="#fff"/><circle cx="618" cy="7" r="1.300" fill="#40508d"/><circle cx="618" cy="13" r="1.300" fill="#40508d"/><path d="M618 7v6" stroke="#40508d"/>
<path d="M744 15h10M746 15v-7c0-3 2-5 3-5s4 2 4 5v7" stroke="#fff" stroke-width="1.100"/><circle cx="755" cy="15" r="5" fill="#e51400"/>
<path d="M790 17l6-6M793 17l3-3" stroke="#7b88b5" stroke-dasharray="1 1"/></svg>
<div class="t w" style="left:829px;top:1141px">Ready</div>
<div class="t w" style="left:1198px;top:1140px">1 / 0</div>
<div class="t w" style="left:1280px;top:1140px">12</div>
<div class="t w" style="left:1335px;top:1140px">master</div>
<div class="t w" style="left:1435px;top:1140px">RPAT-develop</div>
<div class="a" style="left:1553px;top:1146px;width:8px;text-align:center;font:bold 8px/10px 'Liberation Sans';color:#fff">3</div>

<!-- Activate Windows -->
<div class="t" style="left:1295px;top:1061px;font-size:20px;line-height:24px;color:rgba(150,150,150,.6)">Activate Windows</div>
<div class="t" style="left:1295px;top:1086px;font-size:15px;line-height:18px;color:rgba(150,150,150,.6)">Go to Settings to activate Windows.</div>
</body></html>
